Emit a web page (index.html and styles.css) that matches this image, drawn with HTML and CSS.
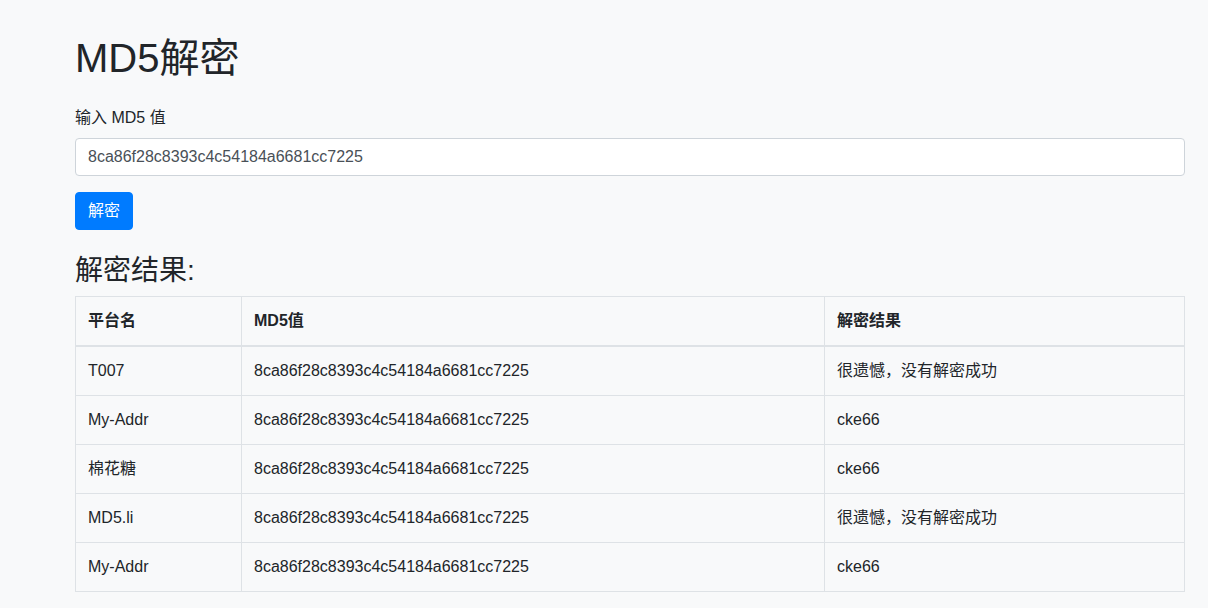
FILE: index.html
```html
<!DOCTYPE html>
<html lang="zh-CN">
<head>
<meta charset="utf-8">
<title>MD5解密</title>
<link rel="stylesheet" href="styles.css">
</head>
<body>
<div class="container">
  <h1 class="title">MD5解密</h1>
  <form class="form">
    <div class="form-group">
      <label class="label" for="md5">输入 MD5 值</label>
      <input class="input" id="md5" type="text" value="8ca86f28c8393c4c54184a6681cc7225">
    </div>
    <button class="btn" type="button">解密</button>
  </form>
  <h3 class="subtitle">解密结果:</h3>
  <table class="table">
    <colgroup>
      <col class="c1"><col class="c2"><col class="c3">
    </colgroup>
    <thead>
      <tr><th>平台名</th><th>MD5值</th><th>解密结果</th></tr>
    </thead>
    <tbody>
      <tr><td>T007</td><td>8ca86f28c8393c4c54184a6681cc7225</td><td>很遗憾，没有解密成功</td></tr>
      <tr><td>My-Addr</td><td>8ca86f28c8393c4c54184a6681cc7225</td><td>cke66</td></tr>
      <tr><td>棉花糖</td><td>8ca86f28c8393c4c54184a6681cc7225</td><td>cke66</td></tr>
      <tr><td>MD5.li</td><td>8ca86f28c8393c4c54184a6681cc7225</td><td>很遗憾，没有解密成功</td></tr>
      <tr><td>My-Addr</td><td>8ca86f28c8393c4c54184a6681cc7225</td><td>cke66</td></tr>
    </tbody>
  </table>
</div>
</body>
</html>
```
FILE: styles.css
```css
* { box-sizing: border-box; }
html, body {
  margin: 0;
  background: #f8f9fa;
}
body {
  font-family: "Liberation Sans", Arial, "Noto Sans CJK SC", sans-serif;
  font-size: 16px;
  line-height: 1.5;
  color: #212529;
}
.container {
  width: 1110px;
  margin-left: 75px;
  padding-top: 34px;
}
.title {
  margin: 0 0 24px;
  font-size: 40px;
  font-weight: 400;
  line-height: 1.2;
}
.form { margin: 0; }
.form-group { margin-bottom: 16px; }
.label {
  display: inline-block;
  margin-bottom: 8px;
}
.input {
  display: block;
  width: 100%;
  height: 38px;
  padding: 6px 12px;
  font: inherit;
  color: #495057;
  background: #fff;
  border: 1px solid #ced4da;
  border-radius: 4px;
  outline: none;
}
.btn {
  display: inline-block;
  padding: 6px 12px;
  font: inherit;
  line-height: 1.5;
  color: #fff;
  background: #007bff;
  border: 1px solid #007bff;
  border-radius: 4px;
  vertical-align: top;
}
.subtitle {
  margin: 24px 0 8px;
  font-size: 28px;
  font-weight: 400;
  line-height: 1.2;
}
.table {
  width: 100%;
  border-collapse: collapse;
  table-layout: fixed;
  border: 1px solid #dee2e6;
}
.c1 { width: 166px; }
.c2 { width: 583px; }
.table th,
.table td {
  padding: 12px;
  border: 1px solid #dee2e6;
  text-align: left;
  vertical-align: top;
}
.table th {
  font-weight: 700;
  border-bottom-width: 2px;
}
```
